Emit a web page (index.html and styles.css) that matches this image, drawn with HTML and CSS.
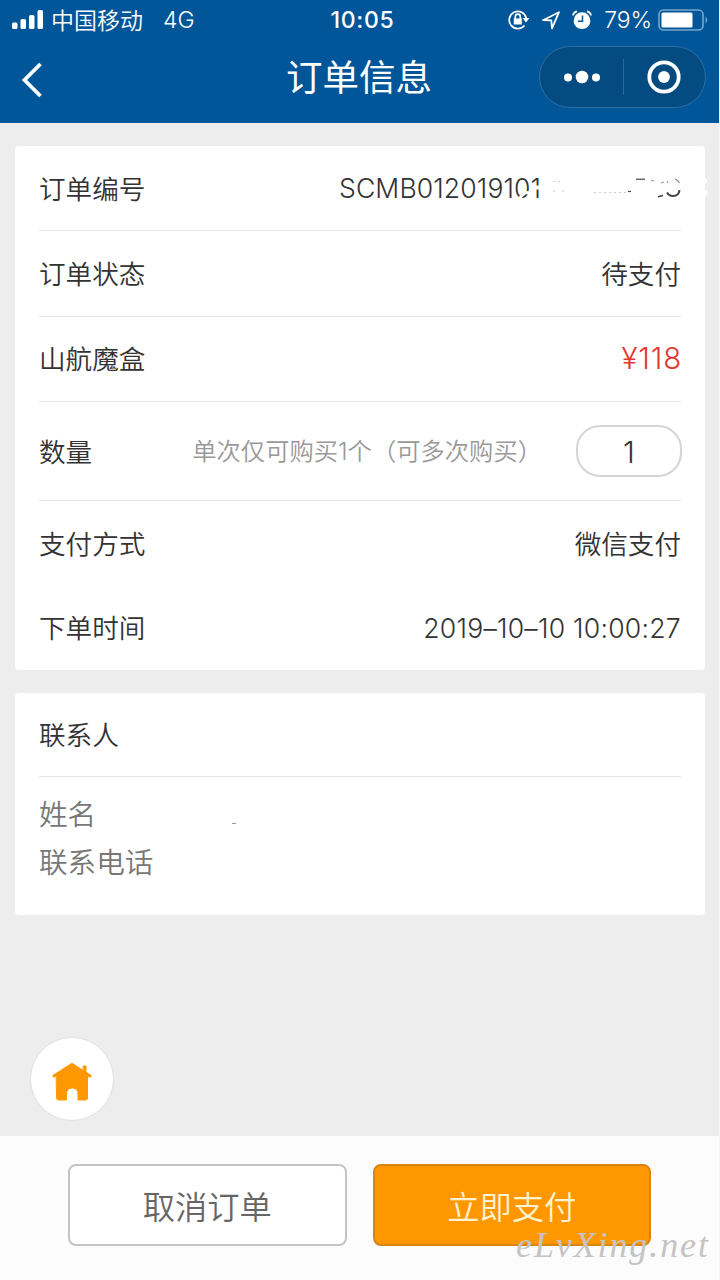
FILE: index.html
```
<!DOCTYPE html>
<html lang="zh-CN">
<head>
    <meta charset="UTF-8">
    <meta name="viewport" content="width=device-width, initial-scale=1.0">
    <title>订单信息</title>
    <link rel="stylesheet" href="styles.css">
</head>
<body>
    <header class="header">
        <div class="status-bar">
            <div class="status-left">
                <svg width="32" height="20" viewBox="0 0 32 20" fill="#fff">
                    <rect x="0" y="12.5" width="5.5" height="6.5" rx="1.5"/>
                    <rect x="8.5" y="9" width="5.5" height="10" rx="1.5"/>
                    <rect x="17" y="5" width="5.5" height="14" rx="1.5"/>
                    <rect x="25.5" y="0" width="5.5" height="19" rx="1.5"/>
                </svg>
                <span class="carrier">中国移动</span>
                <span class="network">4G</span>
            </div>
            <span class="time">10:05</span>
            <div class="status-right">
                <svg width="22" height="20" viewBox="0 0 22 20" fill="none" stroke="#fff" stroke-width="1.7">
                    <path d="M18.2 8A8.6 8.6 0 1 0 16.5 15.5"/>
                    <path d="M14.5 8h7L18 12.5z" fill="#fff" stroke="none"/>
                    <rect x="5.8" y="8.5" width="8" height="6" fill="#fff" stroke="none"/>
                    <path d="M7.3 9V6.7a2.5 2.5 0 0 1 5 0V9"/>
                </svg>
                <svg width="18" height="19" viewBox="0 0 18 19" fill="none" stroke="#fff" stroke-width="1.8" stroke-linejoin="round">
                    <path d="M1 9.2L17 1.2L10 17.3L9.3 9.4z"/>
                </svg>
                <svg width="20" height="20" viewBox="0 0 20 20">
                    <circle cx="10" cy="10.7" r="8.4" fill="#fff"/>
                    <path d="M1 5.5Q1.5 2 5 1.3M15 1.3Q18.5 2 19 5.5" fill="none" stroke="#fff" stroke-width="1.7"/>
                    <path d="M10.5 5.5V11.3H6" fill="none" stroke="#005698" stroke-width="1.5"/>
                </svg>
                <span class="percent">79%</span>
                <svg width="52" height="22" viewBox="0 0 52 22">
                    <rect x="1" y="1" width="44" height="20" rx="4.5" fill="none" stroke="#78a6cb" stroke-width="1.6"/>
                    <rect x="3.5" y="3.5" width="31" height="15" rx="1.5" fill="#fff"/>
                    <path d="M47.5 7.5Q51 11 47.5 14.5z" fill="#78a6cb"/>
                </svg>
            </div>
        </div>
        <div class="nav-bar">
            <svg class="back" width="22" height="36" viewBox="0 0 22 36" fill="none" stroke="#fff" stroke-width="3.8">
                <path d="M19.5 2L3.5 18L19.5 34"/>
            </svg>
            <h1>订单信息</h1>
            <div class="capsule">
                <svg width="36" height="14" viewBox="0 0 36 14" fill="#fff">
                    <circle cx="4" cy="7.5" r="4"/>
                    <circle cx="18" cy="7" r="6.3"/>
                    <circle cx="32" cy="7.5" r="4"/>
                </svg>
                <span class="divider"></span>
                <svg width="34" height="34" viewBox="0 0 34 34">
                    <circle cx="17" cy="17" r="14.7" fill="none" stroke="#fff" stroke-width="3.8"/>
                    <circle cx="17" cy="17" r="5.9" fill="#fff"/>
                </svg>
            </div>
        </div>
    </header>

    <main>
        <section class="card order">
            <div class="row">
                <span>订单编号</span>
                <div class="order-no">
                    <span class="num">SCMB012019101</span>
                    <svg class="mask" width="200" height="30" viewBox="0 0 200 30" fill="none">
                        <path d="M9 25L14 19L19 18.5L24 20" stroke="#fff" stroke-width="3"/>
                        <path d="M23 13.5H34" stroke="#fff" stroke-width="4"/>
                        <path d="M194 7H195M194 19H195" stroke="#fff" stroke-width="5" stroke-linecap="round"/>
                        <g stroke="#444" stroke-width="1.2">
                            <path d="M126 5.2H135"/>
                            <path d="M141 6L144 7M151 9L154 8" stroke="#999"/>
                            <path d="M157 8.5L158 7.5M165 5Q168 6 169.5 9" stroke="#888"/>
                            <path d="M148 22.8L153 21.5" stroke-width="1.6"/>
                            <path d="M169.5 16Q169 22 163 22Q159 22 157 18.5" stroke-width="2"/>
                            <path d="M118 17.5H121"/>
                        </g>
                        <path d="M43 7.5H50M43 17H46M52 17H56M84 18.5H116" stroke="#ccc" stroke-width="1" stroke-dasharray="2 3"/>
                    </svg>
                </div>
            </div>
            <div class="row">
                <span>订单状态</span>
                <span>待支付</span>
            </div>
            <div class="row">
                <span>山航魔盒</span>
                <span class="num price">¥118</span>
            </div>
            <div class="row quantity">
                <span>数量</span>
                <span class="hint">单次仅可购买1个（可多次购买）</span>
                <span class="stepper">1</span>
            </div>
            <div class="row plain">
                <span>支付方式</span>
                <span>微信支付</span>
            </div>
            <div class="row plain">
                <span>下单时间</span>
                <span class="num date">2019–10–10 10:00:27</span>
            </div>
        </section>

        <section class="card contact">
            <div class="row">
                <span>联系人</span>
            </div>
            <div class="field">
                <span>姓名</span>
                <i class="dash"></i>
            </div>
            <div class="field">
                <span>联系电话</span>
            </div>
        </section>
    </main>

    <a class="home">
        <svg width="40" height="38" viewBox="0 0 40 38" fill="#ff9703" stroke="#ff9703" stroke-linejoin="round" stroke-linecap="round">
            <path d="M2 13L20 1.5L38 13" stroke-width="3"/>
            <path d="M31.5 3H34V12H31.5z" stroke-width="1"/>
            <path d="M4.5 13L20 2L35.5 13V35Q35.5 37 33.5 37H26V31Q26 25 20.3 25Q14.5 25 14.5 31V37H6.5Q4.5 37 4.5 35z" stroke-width="1"/>
        </svg>
    </a>

    <footer class="footer">
        <button class="btn">取消订单</button>
        <button class="btn pay">立即支付</button>
        <span class="watermark">eLvXing.net</span>
    </footer>
</body>
</html>
```
FILE: styles.css
```
* {
    box-sizing: border-box;
}
body {
    margin: 0;
    height: 1280px;
    display: flex;
    flex-direction: column;
    position: relative;
    overflow: hidden;
    background-color: #ededed;
    border-right: 1px solid #f4f6f8;
    color: #333;
    font-family: Inter, "Noto Sans CJK SC", sans-serif;
    font-weight: 350;
    font-size: 26.6px;
}
svg {
    display: block;
    flex: none;
}
span, h1, button {
    white-space: nowrap;
}

.header {
    height: 123px;
    background-color: #005698;
    color: #fff;
}
.status-bar {
    height: 40px;
    display: grid;
    grid-template-columns: 1fr auto 1fr;
    align-items: center;
    padding: 0 9px 0 12px;
    font-size: 23px;
}
.status-left, .status-right {
    display: flex;
    align-items: center;
}
.status-right {
    justify-content: flex-end;
    gap: 12px;
}
.network {
    margin-left: 20px;
}
.carrier {
    margin: -2px 0 0 7px;
}
.time {
    margin-left: 3px;
    font-weight: 500;
    letter-spacing: 0.7px;
}
.percent {
    margin-right: -6px;
    letter-spacing: -0.1px;
}
.nav-bar {
    height: 74px;
    display: grid;
    grid-template-columns: 266px auto 1fr;
    align-items: center;
    padding: 0 13px 0 20px;
}
.nav-bar h1 {
    margin: -3px 0 0;
    font-size: 36.5px;
    font-weight: 400;
}
.back {
    margin: 6px 0 0 1px;
}
.capsule {
    justify-self: end;
    width: 167px;
    height: 62px;
    display: flex;
    align-items: center;
    justify-content: space-between;
    padding: 0 24px;
    border: 1px solid #2e6ea2;
    border-radius: 31px;
    background-color: #044b82;
}
.divider {
    width: 1px;
    height: 36px;
    margin-right: 1px;
    background-color: #2e6695;
}

main {
    padding: 23px 14px 0 15px;
}
.card {
    background-color: #fff;
    border-radius: 4px;
    padding: 0 24px;
}
.order {
    height: 524px;
    margin-bottom: 23px;
}
.contact {
    height: 222px;
}
.row {
    height: 85.3px;
    display: flex;
    align-items: center;
    justify-content: space-between;
    padding-bottom: 2px;
    border-bottom: 1px solid #e6e6e6;
}
.row.plain {
    height: 84.5px;
    border-bottom: none;
}
.row.quantity {
    height: 99px;
    padding-bottom: 0;
}
.contact .row {
    height: 84px;
    margin-bottom: 11px;
}
.order-no {
    position: relative;
    width: 342px;
    padding-top: 2px;
}
.num {
    letter-spacing: 0.1px;
}
.mask {
    position: absolute;
    left: 171px;
    top: 4px;
}
.price {
    color: #e5382f;
    font-size: 29.5px;
    letter-spacing: 0.8px;
    margin-right: -1px;
}
.date {
    padding-top: 2px;
    letter-spacing: 0.25px;
}
.hint {
    margin: -2px 34px 0 auto;
    color: #999;
    font-size: 24.3px;
}
.stepper {
    width: 106px;
    height: 52px;
    margin-right: -1px;
    border: 2px solid #d5d5d5;
    border-radius: 24px;
    text-align: center;
    line-height: 50px;
    font-size: 30px;
}
.field {
    height: 48px;
    display: flex;
    align-items: center;
    color: #777;
    font-size: 28.6px;
}
.dash {
    width: 4px;
    height: 1px;
    margin: 23px 0 0 136px;
    background-color: #999;
}

.home {
    position: absolute;
    left: 30px;
    top: 1037px;
    width: 84px;
    height: 84px;
    display: flex;
    align-items: center;
    justify-content: center;
    padding-top: 5px;
    border: 1px solid #e2e2e2;
    border-radius: 50%;
    background-color: #fff;
}

.footer {
    position: relative;
    height: 144px;
    margin-top: auto;
    display: flex;
    gap: 26px;
    padding: 28px 68px;
    background-color: #fcfcfc;
}
.btn {
    width: 279px;
    height: 82px;
    padding: 0;
    border: 2px solid #c4c4c4;
    border-radius: 8px;
    background-color: #fff;
    color: #666;
    font-family: inherit;
    font-weight: 350;
    font-size: 32.3px;
}
.btn.pay {
    border-color: #d98512;
    background-color: #ff9703;
    color: #fff3d0;
}
.watermark {
    position: absolute;
    left: 516px;
    top: 88px;
    color: #c4c4c4;
    font-family: "Liberation Serif", serif;
    font-style: italic;
    font-weight: 400;
    font-size: 36px;
    letter-spacing: 1.9px;
}
```
